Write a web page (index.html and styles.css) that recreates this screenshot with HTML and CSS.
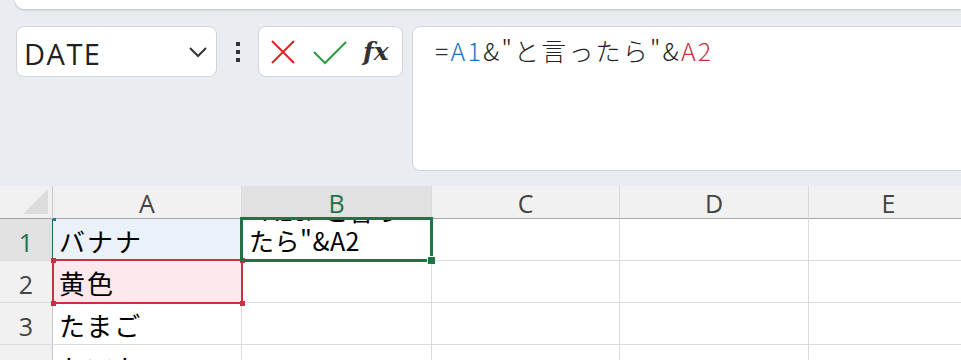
FILE: index.html
```html
<!DOCTYPE html>
<html lang="ja">
<head>
  <meta charset="UTF-8" />
  <title>Excel 数式バー</title>
  <link rel="stylesheet" href="styles.css">
</head>
<body>
  <div class="ribbon-edge"></div>

  <div class="formula-row">
    <div class="name-box">
      <span>DATE</span>
      <svg class="chevron" width="20" height="12" viewBox="0 0 20 12"><path d="M2 2 L10 10 L18 2" fill="none" stroke="#333" stroke-width="2"/></svg>
    </div>
    <div class="kebab"><i></i><i></i><i></i></div>
    <div class="fx-buttons">
      <svg width="26" height="26" viewBox="0 0 26 26"><path d="M2 2 L24 24 M24 2 L2 24" stroke="#e02424" stroke-width="2" fill="none"/></svg>
      <svg width="34" height="26" viewBox="0 0 34 26"><path d="M1 13 L12 24 L33 3" stroke="#2a9d3f" stroke-width="2" fill="none"/></svg>
      <span class="fx">fx</span>
    </div>
    <div class="formula-box">
      <span class="eq">=</span><span class="ref-a1">A1</span>&amp;"と言ったら"&amp;<span class="ref-a2">A2</span>
    </div>
  </div>

  <div class="sheet">
    <div class="corner"><span class="tri"></span></div>
    <div class="col-head">A</div>
    <div class="col-head active">B</div>
    <div class="col-head">C</div>
    <div class="col-head">D</div>
    <div class="col-head">E</div>

    <div class="row-head active">1</div>
    <div class="cell ref-blue">バナナ</div>
    <div class="cell editing">
      <div class="clip"><div class="wrap">=A1&amp;"と言っ<br>たら"&amp;A2</div></div>
    </div>
    <div class="cell"></div>
    <div class="cell"></div>
    <div class="cell"></div>

    <div class="row-head">2</div>
    <div class="cell ref-red"><span class="dot tl"></span><span class="dot tr"></span><span class="dot bl"></span><span class="dot br"></span>黄色</div>
    <div class="cell"></div>
    <div class="cell"></div>
    <div class="cell"></div>
    <div class="cell"></div>

    <div class="row-head">3</div>
    <div class="cell">たまご</div>
    <div class="cell"></div>
    <div class="cell"></div>
    <div class="cell"></div>
    <div class="cell"></div>

    <div class="row-head">4</div>
    <div class="cell">トマト</div>
    <div class="cell"></div>
    <div class="cell"></div>
    <div class="cell"></div>
    <div class="cell"></div>
  </div>
</body>
</html>
```

FILE: styles.css
```css
/* Page */
html, body {
  margin: 0;
  height: 360px;
  overflow: hidden;
  background: #e9ecf0;
  font-family: "Noto Sans CJK JP", "Noto Sans", sans-serif;
  color: #222;
}

.ribbon-edge {
  height: 9px;
  margin-left: 15px;
  background: #fff;
  border-bottom-left-radius: 12px;
  box-shadow: 0 1px 3px rgba(0, 0, 0, 0.18);
}

/* Formula bar */
.formula-row {
  display: flex;
  align-items: flex-start;
  padding: 17px 0 0 16px;
  height: 145px;
}

.name-box {
  width: 201px;
  height: 51px;
  box-sizing: border-box;
  background: #fff;
  border: 1px solid #d2d4d8;
  border-radius: 8px;
  display: flex;
  align-items: center;
  justify-content: space-between;
  padding: 0 8px 0 7px;
}
.name-box span {
  font-family: "Open Sans", "Noto Sans", sans-serif;
  font-size: 29px;
  letter-spacing: 1.5px;
  color: #222;
  padding-top: 3px;
}

.kebab {
  width: 41px;
  height: 51px;
  display: flex;
  flex-direction: column;
  align-items: center;
  justify-content: center;
  gap: 4px;
}
.kebab i {
  display: block;
  width: 4px;
  height: 4px;
  background: #333;
}

.fx-buttons {
  width: 145px;
  height: 51px;
  box-sizing: border-box;
  background: #fff;
  border: 1px solid #d2d4d8;
  border-radius: 8px;
  display: flex;
  align-items: center;
  gap: 17px;
  padding-left: 11px;
}
.fx {
  font-family: "DejaVu Serif", "Liberation Serif", serif;
  font-style: italic;
  font-weight: bold;
  font-size: 25px;
  color: #333;
  margin-left: -1px;
}

.formula-box {
  margin-left: 9px;
  margin-right: -20px;
  flex: 1;
  height: 145px;
  box-sizing: border-box;
  background: #fff;
  border: 1px solid #d2d4d8;
  border-radius: 8px;
  padding: 5px 0 0 22px;
  font-size: 25px;
  letter-spacing: 2.2px;
  font-weight: 300;
  color: #222;
}
.eq { color: #333; }
.ref-a1 { color: #1a73c8; }
.ref-a2 { color: #c8313f; }

/* Sheet grid */
.sheet {
  display: grid;
  grid-template-columns: 53px 189px 190px 188px 189px 160px;
  grid-template-rows: 33px 42px 42px 42px 42px;
  margin-top: 15px;
  background: #fff;
}

.corner {
  background: #f1f1f1;
  border-right: 1px solid #c8c8c8;
  border-bottom: 1px solid #a6a6a6;
  display: flex;
  align-items: flex-end;
  justify-content: flex-end;
  padding: 0 4px 4px 0;
}
.tri {
  width: 0;
  height: 0;
  border-left: 25px solid transparent;
  border-bottom: 25px solid #dcdcdc;
}

.col-head {
  background: #f1f1f1;
  border-right: 1px solid #dadada;
  border-bottom: 1px solid #a6a6a6;
  text-align: center;
  font-family: "Open Sans", "Noto Sans", sans-serif;
  font-size: 25px;
  line-height: 34px;
  color: #444;
}
.col-head.active {
  background: #e1e1e1;
  color: #217346;
}

.row-head {
  background: #f1f1f1;
  border-right: 1px solid #c8c8c8;
  border-bottom: 1px solid #dadada;
  text-align: center;
  font-family: "Open Sans", "Noto Sans", sans-serif;
  font-size: 25px;
  line-height: 46px;
  color: #444;
}
.row-head.active {
  background: #e1e1e1;
  color: #217346;
  border-right: 2px solid #217346;
  margin-right: -1px;
}

.cell {
  position: relative;
  border-right: 1px solid #dcdcdc;
  border-bottom: 1px solid #dcdcdc;
  font-size: 26px;
  letter-spacing: 2px;
  line-height: 44px;
  padding-left: 6px;
  color: #000;
}

.ref-blue { background: #eaf1f8; }
.ref-blue::before, .ref-blue::after {
  content: '';
  position: absolute;
  top: -1px;
  width: 3px;
  height: 3px;
  background: #1a73c8;
}
.ref-blue::before { left: 0; }
.ref-blue::after { right: -2px; }

.ref-red { background: #fbe9ec; }
.ref-red::after {
  content: '';
  position: absolute;
  inset: -2px -2px -2px -1px;
  border: 2px solid #c8313f;
  pointer-events: none;
}
.dot {
  position: absolute;
  width: 5px;
  height: 5px;
  background: #c8313f;
  z-index: 1;
}
.dot.tl { left: -2px; top: -3px; }
.dot.tr { right: -4px; top: -3px; }
.dot.bl { left: -2px; bottom: -4px; }
.dot.br { right: -4px; bottom: -4px; }

.editing {
  z-index: 2;
  outline: 3px solid #217346;
  outline-offset: -2px;
  margin: -1px 0 0 -1px;
  padding-left: 8px;
}
.editing .clip {
  height: 100%;
  overflow: hidden;
}
.editing .wrap {
  font-size: 25px;
  letter-spacing: 0.5px;
  line-height: 30px;
  margin-top: -23px;
  white-space: nowrap;
}
.editing::after {
  content: '';
  position: absolute;
  right: -4px;
  bottom: -4px;
  width: 7px;
  height: 7px;
  background: #217346;
  border: 1px solid #fff;
  border-width: 1px 0 0 1px;
}
```
